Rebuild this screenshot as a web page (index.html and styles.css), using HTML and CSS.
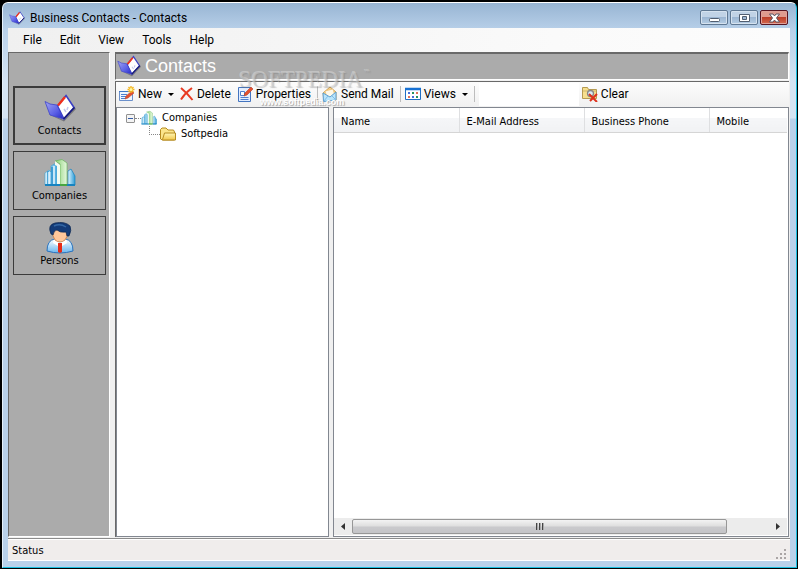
FILE: index.html
```html
<!DOCTYPE html>
<html lang="en">
<head>
<meta charset="utf-8">
<title>Business Contacts - Contacts</title>
<link rel="stylesheet" href="styles.css">
</head>
<body>
<svg class="defs" aria-hidden="true">
  <defs>
    <linearGradient id="blue" x1="0" y1="0" x2="1" y2="1"><stop offset="0" stop-color="#a3a7f2"/><stop offset=".6" stop-color="#5a5fe6"/><stop offset="1" stop-color="#2426c0"/></linearGradient>
    <linearGradient id="tower" x1="0" y1="0" x2="1" y2="0"><stop offset="0" stop-color="#dff4fd"/><stop offset="1" stop-color="#2b9bd6"/></linearGradient>
    <linearGradient id="leaf" x1="0" y1="0" x2="1" y2="0"><stop offset="0" stop-color="#86cf72"/><stop offset="1" stop-color="#e6f8de"/></linearGradient>
    <linearGradient id="gold" x1="0" y1="0" x2="0" y2="1"><stop offset="0" stop-color="#fff6b4"/><stop offset="1" stop-color="#f2c84c"/></linearGradient>
    <linearGradient id="coat" x1="0" y1="0" x2="0" y2="1"><stop offset="0" stop-color="#fff"/><stop offset="1" stop-color="#69b5ee"/></linearGradient>
    <symbol id="book" viewBox="0 0 32 28">
      <path d="M4 20l16 6 11-12 1 1-12 12.500z" fill="#444" opacity=".5"/>
      <path d="M22 1.500l8 12-10 11.500-6.500-13z" fill="#fff" stroke="#3a40c4" stroke-width="1.600"/>
      <path d="M21 3l-7 8.500" stroke="#f2301b" stroke-width="2.400"/>
      <path d="M20 15l2 3M24 13l-1 3" stroke="#c4c8ee" stroke-width="1.500"/>
      <path d="M1 7.500l5 2.500 7 1 6.500 14L6 21z" fill="url(#blue)" stroke="#3d42cc" stroke-width=".8"/>
      <path d="M19.500 25l11-11.500" stroke="#191b78" stroke-width="1.800"/>
    </symbol>
    <symbol id="city" viewBox="0 0 32 28">
      <path d="M1 26V14l4-3 2 2V7l5-3 3 3v19z" fill="url(#tower)" stroke="#3b9fd2" stroke-width=".6"/>
      <path d="M4 12v13M8 8v17" stroke="#2d93cd" stroke-width="1.500"/>
      <path d="M5 13v12M10 7v18" stroke="#effaff" stroke-width="1.400"/>
      <path d="M24 26V12l3-2 4 7v9z" fill="url(#tower)" stroke="#1681bd" stroke-width=".7"/>
      <path d="M11 2l7-1.500 5 3.500v22h-7V5z" fill="url(#leaf)" stroke="#65b159" stroke-width=".7"/>
      <path d="M11 2l5 4v20h-3V7l-2-1z" fill="#f3fbf0"/>
      <path d="M1 26h15M23 26h8" stroke="#1683c0" stroke-width="2"/><path d="M16 26h7" stroke="#47a641" stroke-width="2"/>
    </symbol>
    <symbol id="person" viewBox="0 0 28 32">
      <path d="M1 29q0-11 8-12h10q8 1 8 12-13 4-26 0z" fill="url(#coat)" stroke="#2872bd"/>
      <path d="M8 17l6 4 6-4 1 4-5 3h-4l-5-3z" fill="#fff"/>
      <path d="M12 21h4v9l-2 1-2-1z" fill="#e62b18"/>
      <path d="M7 9q0-4 7-4t7 4q1 6-2 9-5 4-10 0-3-4-2-9z" fill="#ffc79b" stroke="#bd6a34" stroke-width=".7"/>
      <path d="M5 12Q1 3 9 1q10-2 15 3 2 4-1 10h-2l-1-4q-6 1-9-2-3 0-4 5z" fill="#143b78" stroke="#0b254f" stroke-width=".7"/>
      <path d="M8 4q6-3 12 1" fill="none" stroke="#3568a5" stroke-width="1.500"/>
    </symbol>
    <symbol id="folder" viewBox="0 0 16 16">
      <path d="M.5 13V3.500L2 2h4l2 2h5.500l1 2v8h-12z" fill="#fbe58b" stroke="#b68c20"/>
      <path d="M2.500 13.500L4.500 7H15.500v7h-13z" fill="url(#gold)" stroke="#b68c20"/>
    </symbol>
    <symbol id="new" viewBox="0 0 16 16">
      <path d="M.5 5.500h13v9H.5z" fill="#eef5ff" stroke="#6b90cb"/><path d="M0 5.500h10" stroke="#3f78c7"/>
      <path d="M2 8.500h6M2 10.500h5M2 12.500h5" stroke="#4c7fd0"/>
      <path d="M6 13l1-3 6-5 2 2-6 5z" fill="#e55030" stroke="#b94a30" stroke-width=".6"/>
      <path d="M12 0v7M8.500 3.500h7M9.500 1l5 5M14.500 1l-5 5" stroke="#f4b620" stroke-width="1.400"/>
      <circle cx="12" cy="3.500" r="1.500" fill="#fff6a0"/>
    </symbol>
    <symbol id="delete" viewBox="0 0 14 14"><path d="M1 1q6 5 11.500 12M12 1Q5 6 1 12.500" fill="none" stroke="#e83a22" stroke-width="2"/></symbol>
    <symbol id="props" viewBox="0 0 16 16">
      <path d="M1.500 1.500h12v14h-12z" fill="#e3eeff" stroke="#4475c0"/>
      <path d="M3.500 5.500h4v4h-4zM3.500 11.500h8M3.500 13.500h8" fill="#fff" stroke="#517fd0"/>
      <path d="M7 10l1-3 6-6 2 2-6 6z" fill="#e55030" stroke="#b63e27" stroke-width=".6"/>
    </symbol>
    <symbol id="mail" viewBox="0 0 16 16">
      <path d="M1 7l7-6 6 5v8L2 15z" fill="#fbd58a" stroke="#d3a65b"/>
      <path d="M3 5l8-2 2 7-8 2z" fill="#fff8e8" stroke="#e2b468" stroke-width=".6"/>
      <path d="M1 7l7 4 6-5v8L1.500 15.500z" fill="#b9e4fb" stroke="#5c9fd2"/>
      <path d="M1.500 15.500L6 10M14 14l-4-4" stroke="#80bce5"/>
    </symbol>
    <symbol id="views" viewBox="0 0 16 14">
      <path d="M.5 1.500h15v11H.5z" fill="#fff" stroke="#1f6fc4"/><path d="M0 2h16" stroke="#1771d3" stroke-width="2.500"/>
      <path d="M3 5h2v2H3zM7 9h2v2H7z" fill="#496fd8"/><path d="M7 5h2v2H7zM11 9h2v2h-2z" fill="#26935d"/><path d="M11 5h2v2h-2zM3 9h2v2H3z" fill="#df7058"/>
    </symbol>
    <symbol id="clear" viewBox="0 0 16 16">
      <path d="M.5 12.500v-11h5l1 2h8v9z" fill="#f6df8d" stroke="#b59a50"/>
      <path d="M1 5h13" stroke="#d0b768"/><circle cx="8.500" cy="7.500" r="3" fill="#d9edf7" stroke="#888" stroke-width="1.300"/>
      <path d="M7 8l8 8M15 8l-7 7" stroke="#dd321d" stroke-width="2"/>
    </symbol>
  </defs>
</svg>
<div class="window">
  <header class="titlebar">
    <svg class="icon16"><use href="#book"/></svg>
    <h1>Business Contacts - Contacts</h1>
    <div class="controls">
      <button aria-label="Minimize"><svg viewBox="0 0 26 14"><rect x="8.500" y="7.500" width="10" height="3" rx="1" fill="#fff" stroke="#515e70"/></svg></button>
      <button aria-label="Maximize"><svg viewBox="0 0 26 14"><path d="M8.500 3.500h10v7h-10zM11.500 5.500v3h4v-3z" fill="#fff" fill-rule="evenodd" stroke="#515e70"/></svg></button>
      <button class="close" aria-label="Close"><svg viewBox="0 0 26 14"><path d="M8.500 3h3.500l1.500 2L15 3h3.500l-3 4 3 4H15l-1.500-2L12 11H8.500l3-4z" fill="#fff" stroke="#5c5260"/></svg></button>
    </div>
  </header>
  <div class="client">
    <nav class="menubar"><button>File</button><button>Edit</button><button>View</button><button>Tools</button><button>Help</button></nav>
    <div class="body">
      <aside class="sidebar">
        <button class="active"><svg class="big"><use href="#book"/></svg>Contacts</button>
        <button><svg class="big"><use href="#city"/></svg>Companies</button>
        <button><svg class="big"><use href="#person"/></svg>Persons</button>
      </aside>
      <main>
        <div class="heading"><svg><use href="#book"/></svg><h2>Contacts</h2></div>
        <div class="workspace">
          <div class="toolbar">
            <button><svg class="icon16"><use href="#new"/></svg>New<i class="drop"></i></button>
            <button><svg class="icon14"><use href="#delete"/></svg>Delete</button>
            <button><svg class="icon16"><use href="#props"/></svg>Properties</button>
            <span class="sep"></span>
            <button><svg class="icon16"><use href="#mail"/></svg>Send Mail</button>
            <span class="sep"></span>
            <button><svg class="icon16"><use href="#views"/></svg>Views<i class="drop"></i></button>
            <span class="sep"></span>
            <input type="text" aria-label="Find">
            <button><svg class="icon16"><use href="#clear"/></svg>Clear</button>
          </div>
          <div class="panes">
            <ul class="tree">
              <li><div class="node"><button class="toggle" aria-label="Collapse"></button><i class="dots"></i><svg class="icon16"><use href="#city"/></svg>Companies</div>
                <ul><li class="node"><i class="elbow"></i><svg class="icon16"><use href="#folder"/></svg>Softpedia</li></ul>
              </li>
            </ul>
            <section class="list">
              <table><thead><tr><th>Name</th><th>E-Mail Address</th><th>Business Phone</th><th>Mobile</th></tr></thead></table>
              <div class="scrollbar">
                <button aria-label="Scroll left"><svg viewBox="0 0 4 7"><path d="M4 0v7L0 3.500z" fill="#333"/></svg></button>
                <div class="track"><div class="thumb"><i></i><i></i><i></i></div></div>
                <button aria-label="Scroll right"><svg viewBox="0 0 4 7"><path d="M0 0v7l4-3.500z" fill="#333"/></svg></button>
              </div>
            </section>
          </div>
        </div>
      </main>
    </div>
    <footer>Status<svg class="grip" viewBox="0 0 11 11"><path d="M8 0h2v2H8zM4 4h2v2H4zM8 4h2v2H8zM0 8h2v2H0zM4 8h2v2H4zM8 8h2v2H8z" fill="#aaa5a5"/></svg></footer>
  </div>
  <div class="watermark" aria-hidden="true"><span class="brand">SOFTPEDIA</span><sup>™</sup><span class="url">www.softpedia.com</span></div>
</div>
</body>
</html>
```
FILE: styles.css
```css
* { box-sizing: border-box; }
html, body { height: 100%; margin: 0; }
body { background: #000; color: #000; font: 11px/16px "DejaVu Sans Condensed", "Liberation Sans", sans-serif; }
.defs { position: absolute; width: 0; height: 0; }
svg { display: block; flex: none; }
button { display: flex; align-items: center; margin: 0; padding: 0; border: 0; background: none; color: inherit; font: inherit; white-space: nowrap; }
ul { margin: 0; padding: 0; list-style: none; }
h1, h2 { margin: 0; font-weight: 400; }
.window { position: relative; display: flex; flex-direction: column; height: calc(100vh - 3px); margin: 2px 1px 1px 2px; padding: 0 6px 6px 5px; border: 1px solid #19bfe0; border-top-color: #fff; border-left-color: #e6f1fa; border-radius: 6px 6px 0 0; background: linear-gradient(#98b5d3, #b9d1ea 28px, #d5e4f3 80px, #d5e4f3 115px, #b9d1ea 116px); }
.titlebar { display: flex; align-items: center; height: 25px; padding: 4px 2px 0 1px; }
.titlebar h1 { flex: 1; margin-left: 5px; font: 12px/16px Roboto, sans-serif; }
.icon16 { width: 16px; height: 16px; }
.icon14 { width: 14px; height: 14px; }
.controls { display: flex; gap: 2px; }
.controls button { width: 28px; height: 15px; border: 1px solid #5f7893; border-radius: 2px; background: linear-gradient(#c1d3e6 50%, #9cb6d2 50%, #b6cee5); box-shadow: inset 0 0 0 1px #d5e2ef; }
.controls .close { border-color: #571421; background: linear-gradient(#df9b8f 50%, #bd3f2a 50%, #d3694f); box-shadow: inset 0 0 0 1px #dfa199; }
.controls svg { width: 26px; height: 14px; }
.client { display: flex; flex: 1; flex-direction: column; min-height: 0; background: #f0f0f0; border-bottom: 1px solid #fff; }
.menubar { display: flex; height: 24px; gap: 18px; padding: 0 15px; background: linear-gradient(90deg, #f0f0f0, #fafafa 70%, #fcfcfc); font: 12px/16px Roboto, sans-serif; }
.body { display: flex; flex: 1; gap: 5px; min-height: 0; padding: 0 1px 1px 0; }
.sidebar { display: flex; flex: none; flex-direction: column; gap: 6px; width: 102px; padding: 33px 3px 0 4px; border: 1px solid #fff; border-top-color: #696969; border-left-color: #696969; background: #ababab; }
.sidebar button { flex-direction: column; justify-content: flex-end; height: 59px; padding-bottom: 5px; border: 1px solid #3b3b3b; }
.sidebar .active { border-width: 2px; padding-bottom: 4px; }
.sidebar .big { width: 32px; height: 32px; margin-bottom: -1px; }
main { display: flex; flex: 1; flex-direction: column; gap: 1px; min-width: 0; }
.heading { display: flex; align-items: center; height: 28px; padding: 0 0 2px 1px; border: 1px solid #fff; border-top: 2px solid #696969; border-left-color: #696969; background: #ababab; color: #fff; }
.heading svg { width: 24px; height: 24px; }
.heading h2 { margin-left: 4px; font: 18px/22px "Liberation Sans", sans-serif; }
.workspace { display: flex; flex: 1; flex-direction: column; min-height: 0; border-top: 1px solid #696969; border-left: 1px solid #696969; }
.toolbar { display: flex; align-items: center; height: 25px; padding: 0 0 1px 3px; background: linear-gradient(#fdfdfd, #f0f0f0); font: 12px/16px Roboto, sans-serif; }
.toolbar button { gap: 3px; margin-right: 6px; }
.drop { width: 0; height: 0; margin-left: 3px; border: 3px solid transparent; border-top-color: #000; border-bottom: 0; }
.sep { width: 1px; height: 16px; margin-right: 4px; background: #bdbdbd; }
.toolbar input { width: 100px; height: 23px; margin-right: 3px; padding: 0 2px; border: 0; background: #fff; font: inherit; }
.panes { display: flex; flex: 1; gap: 4px; min-height: 0; }
.tree, .list { border: 1px solid #828790; background: #fff; }
.tree { flex: none; width: 213px; padding: 2px 9px; }
.node { display: flex; align-items: center; height: 16px; }
.node svg { margin-right: 5px; }
.toggle { width: 9px; height: 9px; border: 1px solid #919191; border-radius: 1px; background: linear-gradient(#345ca8, #345ca8) center / 5px 1px no-repeat, #f4f4f4; }
.dots { width: 6px; border-top: 1px dotted #888; }
.elbow { width: 11px; height: 9px; margin: -8px 0 0 23px; border: dotted #888; border-width: 0 0 1px 1px; }
.list { display: flex; flex: 1; flex-direction: column; justify-content: space-between; min-width: 0; padding: 0 1px 1px 0; overflow: hidden; }
table { width: 100%; table-layout: fixed; border-collapse: collapse; }
th { width: 125px; height: 24px; padding: 4px 0 0 7px; border-right: 1px solid #dedfe1; border-bottom: 1px solid #d5d5d5; background: linear-gradient(#fff 42%, #f5f6f8 42%, #f1f2f4); font-weight: 400; text-align: left; }
th:last-child { width: auto; border-right: 0; }
.scrollbar { display: flex; height: 17px; background: #ececec; }
.scrollbar button { justify-content: center; width: 18px; }
.scrollbar button svg { width: 4px; height: 7px; }
.track { flex: 1; }
.thumb { display: flex; align-items: center; justify-content: center; gap: 1px; width: 90%; height: 15px; margin-top: 1px; border: 1px solid #979797; border-radius: 2px; background: linear-gradient(#f3f3f3, #dedede 48%, #cacacd 52%, #c4c4c7); }
.thumb i { width: 2px; height: 7px; border-left: 1px solid #444; background: #aaa; }
footer { display: flex; justify-content: space-between; height: 22px; padding: 4px 3px 0 4px; border-top: 1px solid #8b8b8b; background: #f0edec; box-shadow: inset 0 1px #fff; }
.grip { align-self: flex-end; width: 11px; height: 11px; }
.watermark { position: absolute; top: 66px; left: 236px; color: rgba(200, 200, 200, .5); pointer-events: none; text-shadow: 1px 1px 1px rgba(110, 110, 110, .35), -1px -1px rgba(255, 255, 255, .3); }
.watermark span { display: block; }
.brand { font: 23px/22px "Liberation Serif", serif; }
.watermark sup { position: absolute; top: -3px; right: -8px; font-size: 8px; }
.url { margin: 4px 0 0 21px; color: #fff; font: bold 9px/14px "Liberation Sans", sans-serif; text-shadow: 1px 1px 1px rgba(110, 110, 110, .6); }
```
